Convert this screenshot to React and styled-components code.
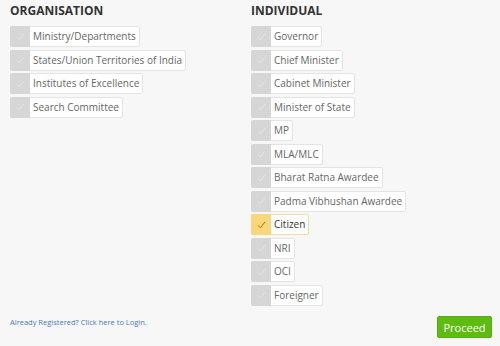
import React from "react";
import styled, { createGlobalStyle } from "styled-components";

const GlobalStyle = createGlobalStyle`
    body {
        margin: 0;
        background: #f7f7f7;
        font-family: "Open Sans", "Liberation Sans", sans-serif;
    }
`;

const Page = styled.div`
    width: 500px;
    height: 346px;
    box-sizing: border-box;
    padding: 0 8px 0 10px;
    display: flex;
    flex-direction: column;
`;

const Columns = styled.div`
    display: flex;
`;

const Column = styled.div`
    width: 241px;
    display: flex;
    flex-direction: column;
    align-items: flex-start;
`;

const Heading = styled.h3`
    margin: 1px 0 6px 0;
    font-size: 12px;
    line-height: 19px;
    font-weight: 700;
    color: #333;
    text-transform: uppercase;
`;

const Option = styled.label`
    display: flex;
    align-items: stretch;
    height: 21px;
    box-sizing: border-box;
    margin-bottom: 2.5px;
    border: 1px solid ${(p) => (p.checked ? "#f5dc9a" : "#e4e4e4")};
    border-radius: 2px;
    background: #fff;
    cursor: pointer;
`;

const Tick = styled.span`
    width: 20px;
    margin: -1px 0 -1px -1px;
    display: flex;
    align-items: center;
    justify-content: center;
    background: ${(p) => (p.checked ? "#fbd77c" : "#d6d6d6")};
    border-radius: 2px 0 0 2px;
    color: ${(p) => (p.checked ? "#b36f00" : "#e6e6e6")};
`;

const OptionText = styled.span`
    padding: 0 3px 0 3px;
    font-size: 10px;
    line-height: 19px;
    color: ${(p) => (p.checked ? "#333" : "#666")};
`;

const Footer = styled.div`
    margin-top: auto;
    height: 30px;
    display: flex;
    align-items: flex-start;
    justify-content: space-between;
`;

const LoginLink = styled.a`
    margin-top: 1px;
    font-size: 7.5px;
    color: #4a7ab8;
    text-decoration: none;
`;

const ProceedButton = styled.button`
    width: 55px;
    height: 22px;
    border: 1px solid #55b010;
    border-radius: 2px;
    background: #5dbb12;
    color: #fff;
    font-family: "Open Sans", "Liberation Sans", sans-serif;
    font-size: 11px;
    padding: 0;
`;

const organisation = [
    "Ministry/Departments",
    "States/Union Territories of India",
    "Institutes of Excellence",
    "Search Committee",
];

const individual = [
    "Governor",
    "Chief Minister",
    "Cabinet Minister",
    "Minister of State",
    "MP",
    "MLA/MLC",
    "Bharat Ratna Awardee",
    "Padma Vibhushan Awardee",
    "Citizen",
    "NRI",
    "OCI",
    "Foreigner",
];

const CheckOption = ({ label, checked }) => (
    <Option checked={checked}>
        <Tick checked={checked}>
            <svg width="9" height="8" viewBox="0 0 9 8">
                <path
                    d="M1 4.3 L3.3 6.8 L8 1"
                    fill="none"
                    stroke="currentColor"
                    strokeWidth="1"
                />
            </svg>
        </Tick>
        <OptionText checked={checked}>{label}</OptionText>
    </Option>
);

export default function App() {
    return (
        <>
            <GlobalStyle />
            <Page>
                <Columns>
                    <Column>
                        <Heading>Organisation</Heading>
                        {organisation.map((item) => (
                            <CheckOption key={item} label={item} />
                        ))}
                    </Column>
                    <Column>
                        <Heading>Individual</Heading>
                        {individual.map((item) => (
                            <CheckOption
                                key={item}
                                label={item}
                                checked={item === "Citizen"}
                            />
                        ))}
                    </Column>
                </Columns>
                <Footer>
                    <LoginLink href="#">
                        Already Registered? Click here to Login.
                    </LoginLink>
                    <ProceedButton>Proceed</ProceedButton>
                </Footer>
            </Page>
        </>
    );
}
